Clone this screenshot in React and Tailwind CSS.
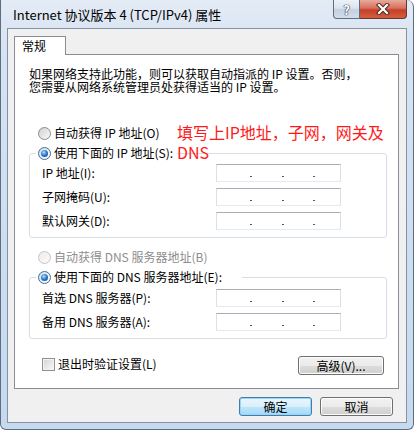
import React from "react";

function Radio({ checked, disabled }) {
  return (
    <span
      className={`relative inline-flex w-[13px] h-[13px] shrink-0 items-center justify-center rounded-full border ${
        disabled
          ? "border-[#c4c4c4] bg-[linear-gradient(135deg,#ececec,#fafafa)]"
          : checked
          ? "border-[#3d6f9b] bg-[linear-gradient(135deg,#d6dde6,#ffffff)]"
          : "border-[#8c8c8c] bg-[linear-gradient(135deg,#cfcfcf,#fbfbfb)]"
      }`}
    >
      {checked && (
        <span className="w-[7px] h-[7px] rounded-full bg-[radial-gradient(circle_at_40%_35%,#b6e2ff_0%,#2f7fd0_45%,#103f7e_100%)]" />
      )}
    </span>
  );
}

function IpBox() {
  return (
    <div className="w-[125px] h-[18px] border border-t-[#abadb3] border-x-[#dbdfe6] border-b-[#e3e9ef] bg-white flex items-end pb-[4px]">
      <span className="ml-[33px] w-[2px] h-[1px] bg-[#555]" />
      <span className="ml-[30px] w-[2px] h-[1px] bg-[#555]" />
      <span className="ml-[29px] w-[2px] h-[1px] bg-[#555]" />
    </div>
  );
}

function Row({ label }) {
  return (
    <div className="flex items-center h-[18px]">
      <div className="w-[174px] whitespace-pre text-[12px] leading-[14px]">{label}</div>
      <IpBox />
    </div>
  );
}

function WinButton({ children, def, className }) {
  return (
    <div
      className={`flex items-center justify-center rounded-[3px] border text-[12px] leading-[14px] ${
        def
          ? "border-[#3c7fb1] bg-[linear-gradient(180deg,#eaf6fd_0%,#d9f0fc_50%,#bee6fd_51%,#a7d9f5_100%)] shadow-[inset_0_0_0_1px_#9ed2f2]"
          : "border-[#707070] bg-[linear-gradient(180deg,#f2f2f2_0%,#ebebeb_50%,#dddddd_51%,#cfcfcf_100%)] shadow-[inset_0_0_0_1px_#fcfcfc]"
      } ${className}`}
    >
      {children}
    </div>
  );
}

export default function App() {
  return (
    <div className="w-[414px] h-[430px] bg-white font-['Noto_Sans_CJK_SC',sans-serif] text-black relative overflow-hidden">
      <div className="w-[414px] h-[430px] rounded-tr-[7px] rounded-b-[6px] border-x border-b border-[#5d6d83] bg-[linear-gradient(180deg,#e3ebf5_0%,#d6e3f2_12%,#c6d9ef_100%)] flex flex-col px-[6px] pb-[6px]">
        {/* title bar */}
        <div className="h-[28px] flex items-start justify-between">
          <div className="pl-[6px] pt-[6px] text-[13px] leading-[17px] whitespace-pre">Internet 协议版本 4 (TCP/IPv4) 属性</div>
          <div className="flex">
            <div className="w-[27px] h-[19px] rounded-bl-[4px] border border-t-0 border-[#5f6d80] bg-[linear-gradient(180deg,#eef2f8_0%,#dbe4ef_45%,#c3d0e0_55%,#d3deea_100%)] flex items-center justify-center">
              <span className="text-white font-bold text-[13px] leading-[13px] [text-shadow:0_0_1px_#2c3a4c,0_0_1px_#2c3a4c,0_0_1px_#2c3a4c]">?</span>
            </div>
            <div className="w-[47px] h-[19px] rounded-br-[4px] border border-l-0 border-t-0 border-[#5f3a35] bg-[linear-gradient(180deg,#e9a99b_0%,#d8705c_45%,#c4402a_55%,#d65d3f_100%)] flex items-center justify-center">
              <svg width="14" height="12" viewBox="0 0 14 12">
                <path d="M3 2 L11 10 M11 2 L3 10" stroke="#4a2b26" strokeWidth="4.2" strokeLinecap="square" />
                <path d="M3 2 L11 10 M11 2 L3 10" stroke="#ffffff" strokeWidth="2.2" strokeLinecap="square" />
              </svg>
            </div>
          </div>
        </div>

        {/* client */}
        <div className="flex-1 border border-[#8592a3] bg-[#f0f0f0] flex flex-col px-[6px]">
          <div className="mt-[7px] w-[52px] h-[19px] -mb-[1px] relative z-10 bg-white border-x border-t border-[#898c95] pl-[7px] text-[12px] leading-[17px]">
            常规
          </div>
          <div className="w-[385px] h-[335px] border border-[#898c95] bg-white flex flex-col">
            <div className="pt-[12px] pl-[14px] text-[12px] leading-[13px] whitespace-pre">
              <div>如果网络支持此功能，则可以获取自动指派的 IP 设置。否则，</div>
              <div>您需要从网络系统管理员处获得适当的 IP 设置。</div>
            </div>

            <div className="mt-[30px] ml-[23px] h-[20px] flex items-center gap-[3px] text-[12px] leading-[14px] whitespace-pre">
              <Radio />
              <span>自动获得 IP 地址(O)</span>
            </div>

            <fieldset className="ml-[14px] w-[358px] border border-[#d5dfe5] rounded-[3px]">
              <legend className="ml-[6px] pl-[2px] pr-[4px]">
                <div className="h-[20px] flex items-center gap-[3px] text-[12px] leading-[14px] whitespace-pre">
                  <Radio checked />
                  <span>使用下面的 IP 地址(S):</span>
                </div>
              </legend>
              <div className="mt-[1px] pl-[12px] pb-[7px] flex flex-col gap-[6px]">
                <Row label="IP 地址(I):" />
                <Row label="子网掩码(U):" />
                <Row label="默认网关(D):" />
              </div>
            </fieldset>

            <div className="mt-[9px] ml-[23px] h-[20px] flex items-center gap-[3px] text-[12px] leading-[14px] whitespace-pre text-[#8d8d8d]">
              <Radio disabled />
              <span>自动获得 DNS 服务器地址(B)</span>
            </div>

            <fieldset className="ml-[14px] w-[358px] border border-[#d5dfe5] rounded-[3px]">
              <legend className="ml-[6px] pl-[2px] pr-[20px]">
                <div className="h-[20px] flex items-center gap-[3px] text-[12px] leading-[14px] whitespace-pre">
                  <Radio checked />
                  <span>使用下面的 DNS 服务器地址(E):</span>
                </div>
              </legend>
              <div className="mt-[2px] pl-[12px] pb-[7px] flex flex-col gap-[6px]">
                <Row label="首选 DNS 服务器(P):" />
                <Row label="备用 DNS 服务器(A):" />
              </div>
            </fieldset>

            <div className="mt-[17px] flex items-center justify-between pl-[27px] pr-[14px]">
              <div className="flex items-center gap-[3px] text-[12px] leading-[14px] whitespace-pre -mt-[3px]">
                <span className="w-[13px] h-[13px] border border-[#8e8f8f] bg-[linear-gradient(135deg,#d4d4d4,#f9f9f9)] shadow-[inset_0_0_0_1px_#f4f4f4]" />
                <span>退出时验证设置(L)</span>
              </div>
              <WinButton className="w-[86px] h-[19px]">高级(V)...</WinButton>
            </div>
          </div>

          <div className="mt-[8px] flex justify-end gap-[8px] pr-[7px]">
            <WinButton def className="w-[73px] h-[19px]">确定</WinButton>
            <WinButton className="w-[73px] h-[19px]">取消</WinButton>
          </div>
        </div>
      </div>

      {/* red annotation */}
      <div className="absolute left-[177px] top-[122px] text-[16px] leading-[20px] text-[#ff1a1a]">
        <div>填写上IP地址，子网，网关及</div>
        <div>DNS</div>
      </div>
    </div>
  );
}
